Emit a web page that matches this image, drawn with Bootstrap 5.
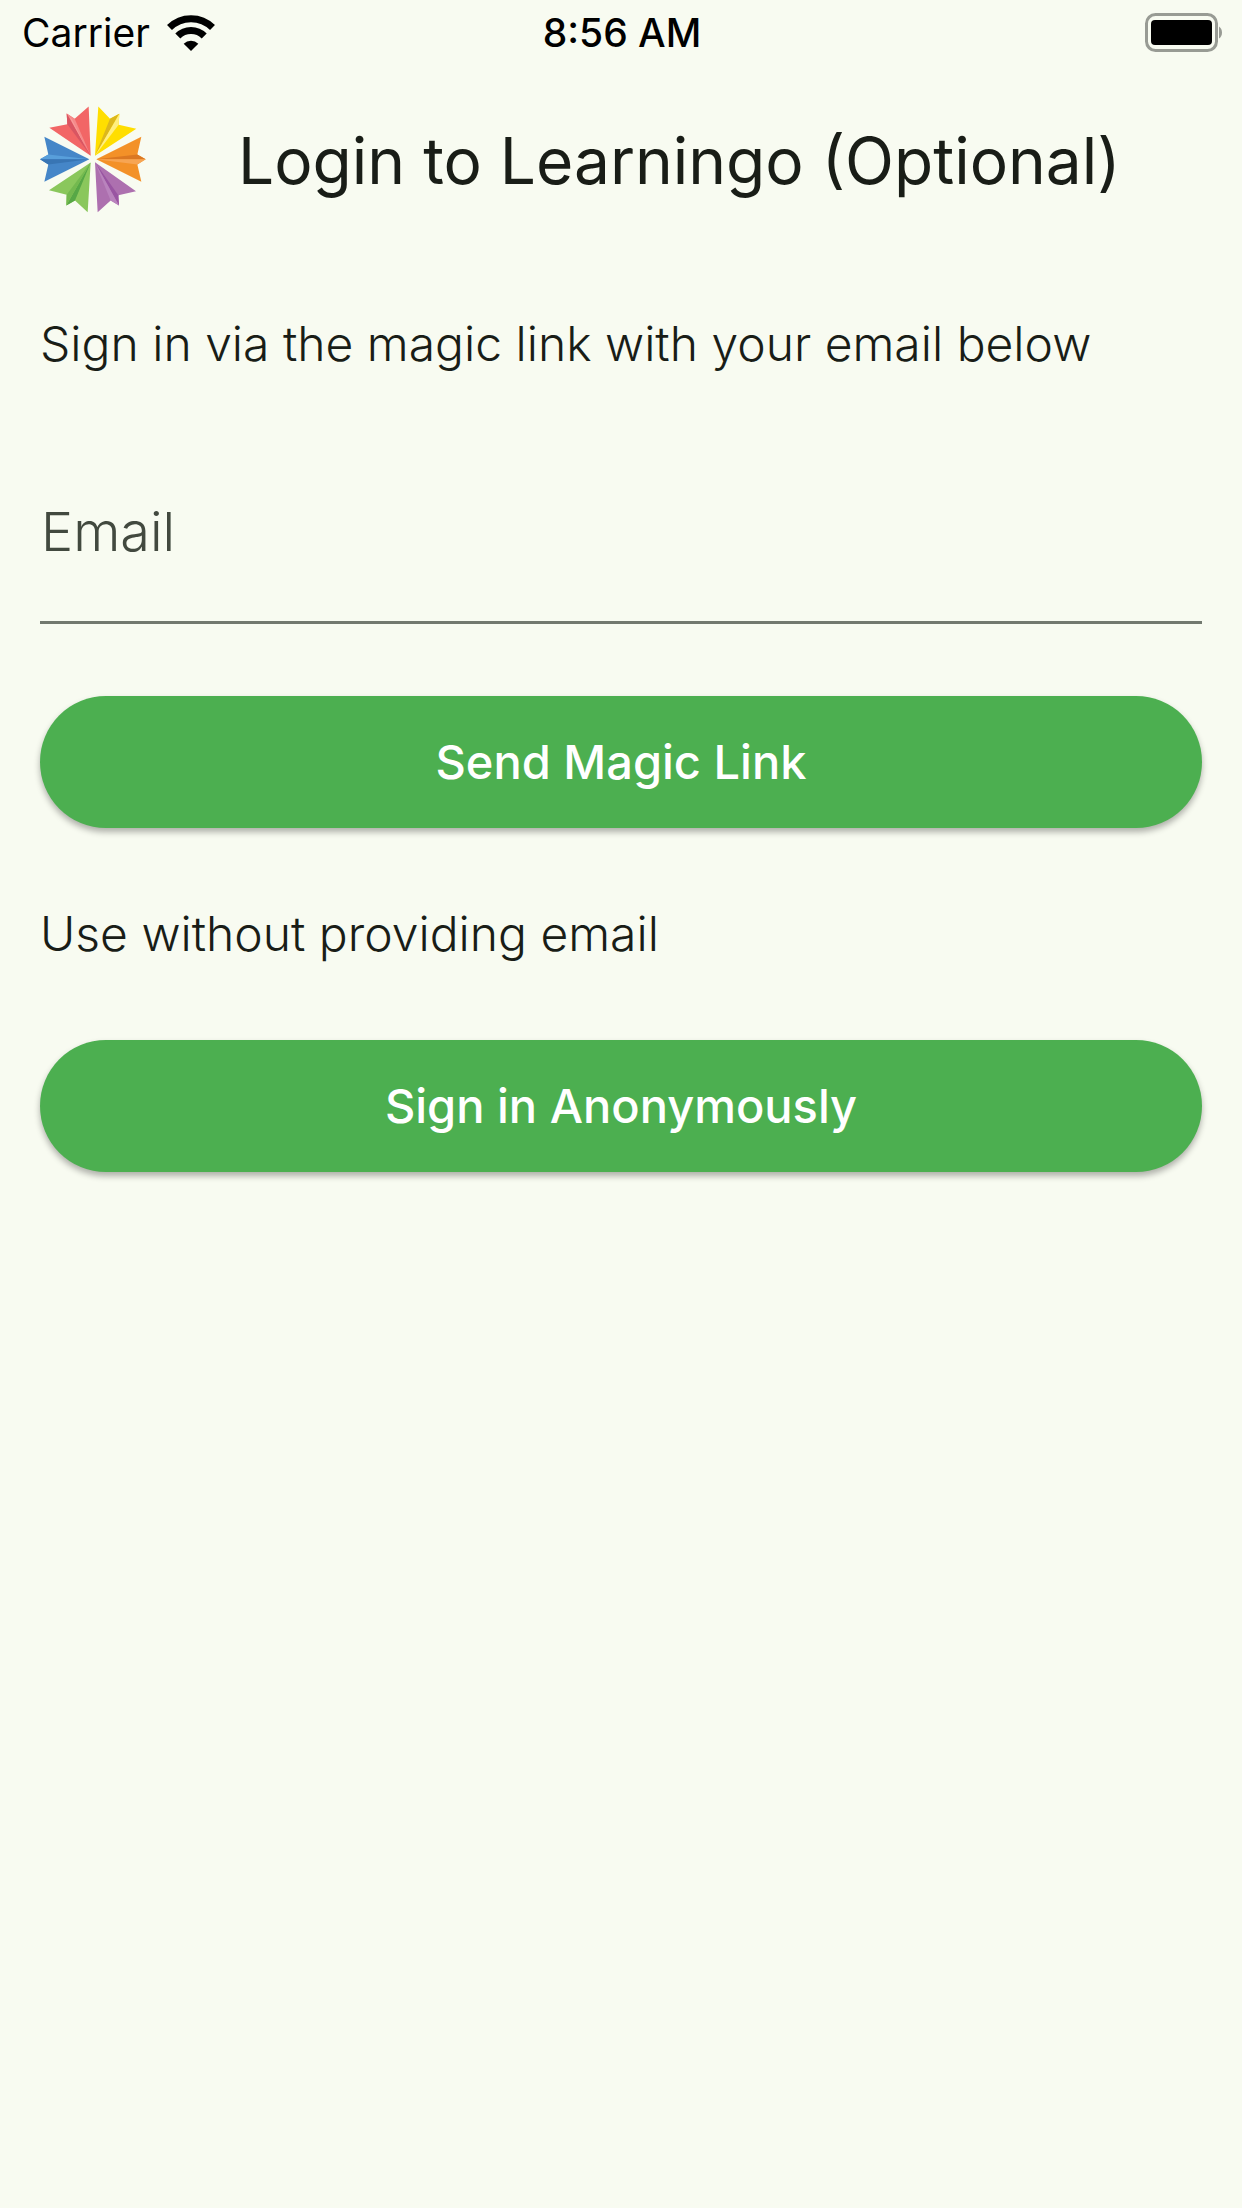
<!DOCTYPE html>
<html lang="en">
<head>
<meta charset="utf-8">
<meta name="viewport" content="width=device-width, initial-scale=1">
<title>Login to Learningo</title>
<link href="https://cdn.jsdelivr.net/npm/bootstrap@5.3.0/dist/css/bootstrap.min.css" rel="stylesheet">
<style>
  body { background: #f8fbf1; color: #191d17; font-family: Inter, "Liberation Sans", sans-serif; }
  .status-bar { height: 66px; padding: 0 20px 0 22px; color: #000; font-size: 39px; line-height: 68px; }
  .status-time { font-weight: 500; }
  .app-bar { height: 186px; padding: 0 40px; }
  .app-logo { width: 106px; height: 107px; margin-right: 92px; }
  .app-title { padding-top: 4px; font-size: 64px; font-weight: 400; line-height: 84px; }
  .login-area { padding: 58px 40px; }
  .login-text { font-size: 48px; font-weight: 300; line-height: 68px; }
  .field-gap { margin-bottom: 60px; }
  .block-gap { margin-bottom: 72px; }
  .email-field > .email-input { height: 186px; padding: 0 2px; font-size: 54px; border: 0; border-bottom: 3px solid #72796f; color: #191d17; }
  .email-field > .email-input, .email-field > .email-input:focus { background: transparent; box-shadow: none; }
  .email-field > .email-input:focus { border-color: #4caf50; }
  .email-field > label { padding: 0; font-size: 54px; font-weight: 300; line-height: 186px; color: #42493f; }
  .email-field > .email-input:focus ~ label, .email-field > .email-input:not(:placeholder-shown) ~ label { line-height: 68px; }
  .btn-login { height: 132px; font-size: 47px; font-weight: 500; line-height: 68px; box-shadow: 0 4px 6px rgba(0,0,0,.3);
    --bs-btn-color: #fff; --bs-btn-bg: #4caf50; --bs-btn-hover-color: #fff; --bs-btn-hover-bg: #449d48;
    --bs-btn-active-color: #fff; --bs-btn-active-bg: #3d8e41; }
</style>
</head>
<body>
<div class="status-bar row g-0 align-items-center flex-nowrap">
  <div class="col d-flex align-items-center">
    <span>Carrier</span>
    <svg class="ms-3" width="50" height="38" viewBox="0 0 50 38" role="img" aria-label="Wi-Fi">
      <g fill="none" stroke="#000" stroke-width="7">
        <path d="M3.500 13.500A30.500 30.500 0 0 1 46.500 13.500"/>
        <path d="M11.800 22A18.500 18.500 0 0 1 38.200 22"/>
      </g>
      <path d="M25 37l-7.300-7.300a10.300 10.300 0 0 1 14.600 0z"/>
    </svg>
  </div>
  <div class="col-auto status-time">8:56 AM</div>
  <div class="col d-flex justify-content-end">
    <svg width="80" height="40" viewBox="0 0 80 40" role="img" aria-label="Battery full">
      <rect x="4.500" y="1.500" width="70" height="36" rx="9" fill="none" stroke="#989b94" stroke-width="3"/>
      <rect x="9" y="7" width="61" height="25" rx="4"/>
      <path d="M77 13.500q3 2 3 6t-3 6z" fill="#989b94"/>
    </svg>
  </div>
</div>

<header class="app-bar d-flex align-items-center">
  <svg class="app-logo flex-shrink-0" viewBox="30 32 318 320" role="img" aria-label="Learningo logo">
    <path d="M176 33L182 181L58 97L112 86L110 54L134 70Z" fill="#f26666"/>
    <path d="M110 54L134 70L182 181Z" fill="#f58a8a"/><path d="M110 54L112 86L182 181Z" fill="#d95562"/><path d="M116 60L126 72L176 172Z" fill="#f79c9c"/>
    <path d="M205 33L240 70L268 55L266 88L319 100L195 181Z" fill="#ffde00"/>
    <path d="M268 55L240 70L195 181Z" fill="#dcb71c"/><path d="M268 55L266 88L195 181Z" fill="#ffee80"/>
    <path d="M43 124L178 191L43 259L55 207L30 191L55 177Z" fill="#4586c8"/>
    <path d="M30 191L55 177L178 191Z" fill="#589fdb"/><path d="M30 191L55 207L178 191Z" fill="#3875b4"/>
    <path d="M334 124L199 191L334 259L322 207L347 191L322 177Z" fill="#f39128"/>
    <path d="M347 191L322 177L199 191Z" fill="#db7822"/><path d="M347 191L322 207L199 191Z" fill="#f7a553"/>
    <path d="M182 201L173 350L135 315L109 330L110 298L57 284Z" fill="#8ac75c"/>
    <path d="M182 201L135 315L109 330Z" fill="#57a746"/><path d="M182 201L109 330L110 298Z" fill="#74b94f"/>
    <path d="M195 200L318 287L265 299L267 330L242 315L203 350Z" fill="#ad70af"/>
    <path d="M195 200L265 299L267 330Z" fill="#9955a2"/><path d="M195 200L267 330L242 315Z" fill="#b983bd"/>
  </svg>
  <h1 class="app-title mb-0">Login to Learningo (Optional)</h1>
</header>

<main class="login-area">
  <form onsubmit="return false">
    <p class="login-text field-gap">Sign in via the magic link with your email below</p>
    <div class="form-floating email-field block-gap">
      <input class="email-input form-control rounded-0" type="email" id="email" placeholder="Email">
      <label for="email">Email</label>
    </div>
    <button class="btn btn-login w-100 rounded-pill border-0 block-gap" type="submit">Send Magic Link</button>
  </form>
  <p class="login-text block-gap">Use without providing email</p>
  <button class="btn btn-login w-100 rounded-pill border-0" type="button">Sign in Anonymously</button>
</main>
<script src="https://cdn.jsdelivr.net/npm/bootstrap@5.3.0/dist/js/bootstrap.bundle.min.js"></script>
</body>
</html>
